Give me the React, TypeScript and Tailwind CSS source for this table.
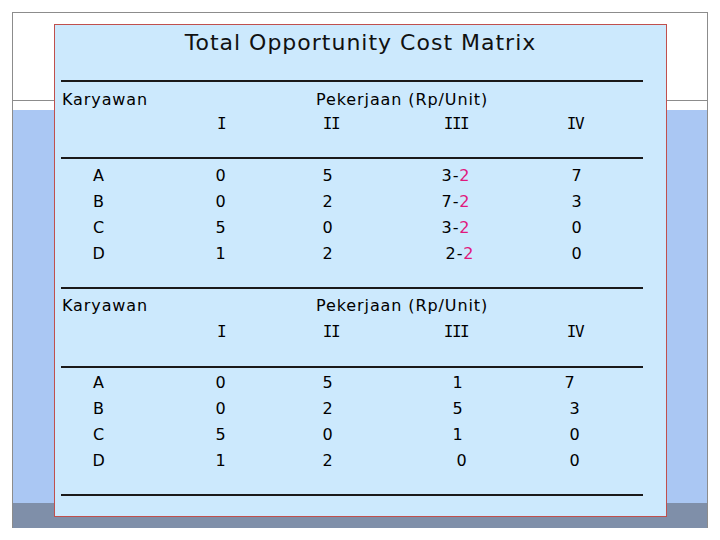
import type { ReactNode } from 'react';

const colW = ['w-[88px]', 'w-[156px]', 'w-[58px]', 'w-[198px]', 'w-[44px]'];

type Cell = { v: ReactNode; nudge?: string };

const Minus2 = ({ a }: { a: string }) => (
  <span>
    {a}-<span className="text-[#e0197d]">2</span>
  </span>
);

const Rule = ({ className = '' }: { className?: string }) => (
  <div className={`ml-[6px] w-[582px] h-[2px] bg-[#1a1a1a] ${className}`} />
);

const Row = ({ cells, className = '' }: { cells: Cell[]; className?: string }) => (
  <div className={`flex h-[26px] items-center ${className}`}>
    {cells.map((c, i) => (
      <div key={i} className={`${colW[i]} flex justify-center`}>
        <span className={c.nudge ?? ''}>{c.v}</span>
      </div>
    ))}
  </div>
);

const Roman = ({ t }: { t: string }) => (
  <span className="font-['DejaVu_Sans_Mono',monospace] tracking-[-1.5px]">{t}</span>
);

const Header = ({ className = '' }: { className?: string }) => (
  <div className={className}>
    <div className="flex h-[24px] items-center">
      <div className="w-[261px] pl-[7px]">Karyawan</div>
      <div>Pekerjaan (Rp/Unit)</div>
    </div>
  </div>
);

const RomanRow = ({ className = '' }: { className?: string }) => (
  <div className={`flex h-[24px] items-center ${className}`}>
    <div className={`${colW[0]}`} />
    <div className={`${colW[1]} flex justify-center`}>
      <Roman t="I" />
    </div>
    <div className={`${colW[2]} flex justify-center`}>
      <span className="translate-x-[3px]">
        <Roman t="II" />
      </span>
    </div>
    <div className={`${colW[3]} flex justify-center`}>
      <Roman t="III" />
    </div>
    <div className={`${colW[4]} flex justify-center`}>
      <span className="translate-x-[-2px]">
        <Roman t="IV" />
      </span>
    </div>
  </div>
);

const table1: Cell[][] = [
  [{ v: 'A' }, { v: '0' }, { v: '5' }, { v: <Minus2 a="3" /> }, { v: '7' }],
  [{ v: 'B' }, { v: '0' }, { v: '2' }, { v: <Minus2 a="7" /> }, { v: '3' }],
  [{ v: 'C' }, { v: '5' }, { v: '0' }, { v: <Minus2 a="3" /> }, { v: '0' }],
  [{ v: 'D' }, { v: '1' }, { v: '2' }, { v: <Minus2 a="2" />, nudge: 'translate-x-[4px]' }, { v: '0' }],
];

const table2: Cell[][] = [
  [{ v: 'A' }, { v: '0' }, { v: '5' }, { v: '1', nudge: 'translate-x-[2px]' }, { v: '7', nudge: 'translate-x-[-7px]' }],
  [{ v: 'B' }, { v: '0' }, { v: '2' }, { v: '5', nudge: 'translate-x-[2px]' }, { v: '3', nudge: 'translate-x-[-2px]' }],
  [{ v: 'C' }, { v: '5' }, { v: '0' }, { v: '1', nudge: 'translate-x-[2px]' }, { v: '0', nudge: 'translate-x-[-2px]' }],
  [{ v: 'D' }, { v: '1' }, { v: '2' }, { v: '0', nudge: 'translate-x-[6px]' }, { v: '0', nudge: 'translate-x-[-2px]' }],
];

export default function App() {
  return (
    <div className="relative w-[720px] h-[540px] bg-white overflow-hidden">
      {/* slide backdrop */}
      <div className="ml-[12px] mt-[12px] w-[696px] h-[516px] border-l border-t border-r border-[#8c8c8c] flex flex-col">
        <div className="h-[87px]" />
        <div className="h-px bg-[#8c8c8c]" />
        <div className="h-[9px]" />
        <div className="flex-1 bg-[#aac7f3]" />
        <div className="h-[25px] bg-[#7f8fa9]" />
      </div>

      {/* matrix card */}
      <div className="absolute left-[54px] top-[24px] w-[613px] h-[493px] border border-[#c0504d] bg-[#cce9fd] text-[16px] tracking-[0.9px] text-black font-['Verdana','DejaVu_Sans',sans-serif] leading-none">
        <div className="h-[36px] flex items-center justify-center text-[22px] tracking-[1px] text-[#111]">
          Total Opportunity Cost Matrix
        </div>
        <Rule className="mt-[19px]" />
        <Header className="mt-[6px]" />
        <RomanRow />
        <Rule className="mt-[21px]" />
        <div className="mt-[4px]">
          {table1.map((r, i) => (
            <Row key={i} cells={r} />
          ))}
        </div>
        <Rule className="mt-[20px]" />
        <Header className="mt-[5px]" />
        <RomanRow className="mt-[2px]" />
        <Rule className="mt-[22px]" />
        <div className="mt-[2px]">
          {table2.map((r, i) => (
            <Row key={i} cells={r} />
          ))}
        </div>
        <Rule className="mt-[20px]" />
      </div>
    </div>
  );
}
